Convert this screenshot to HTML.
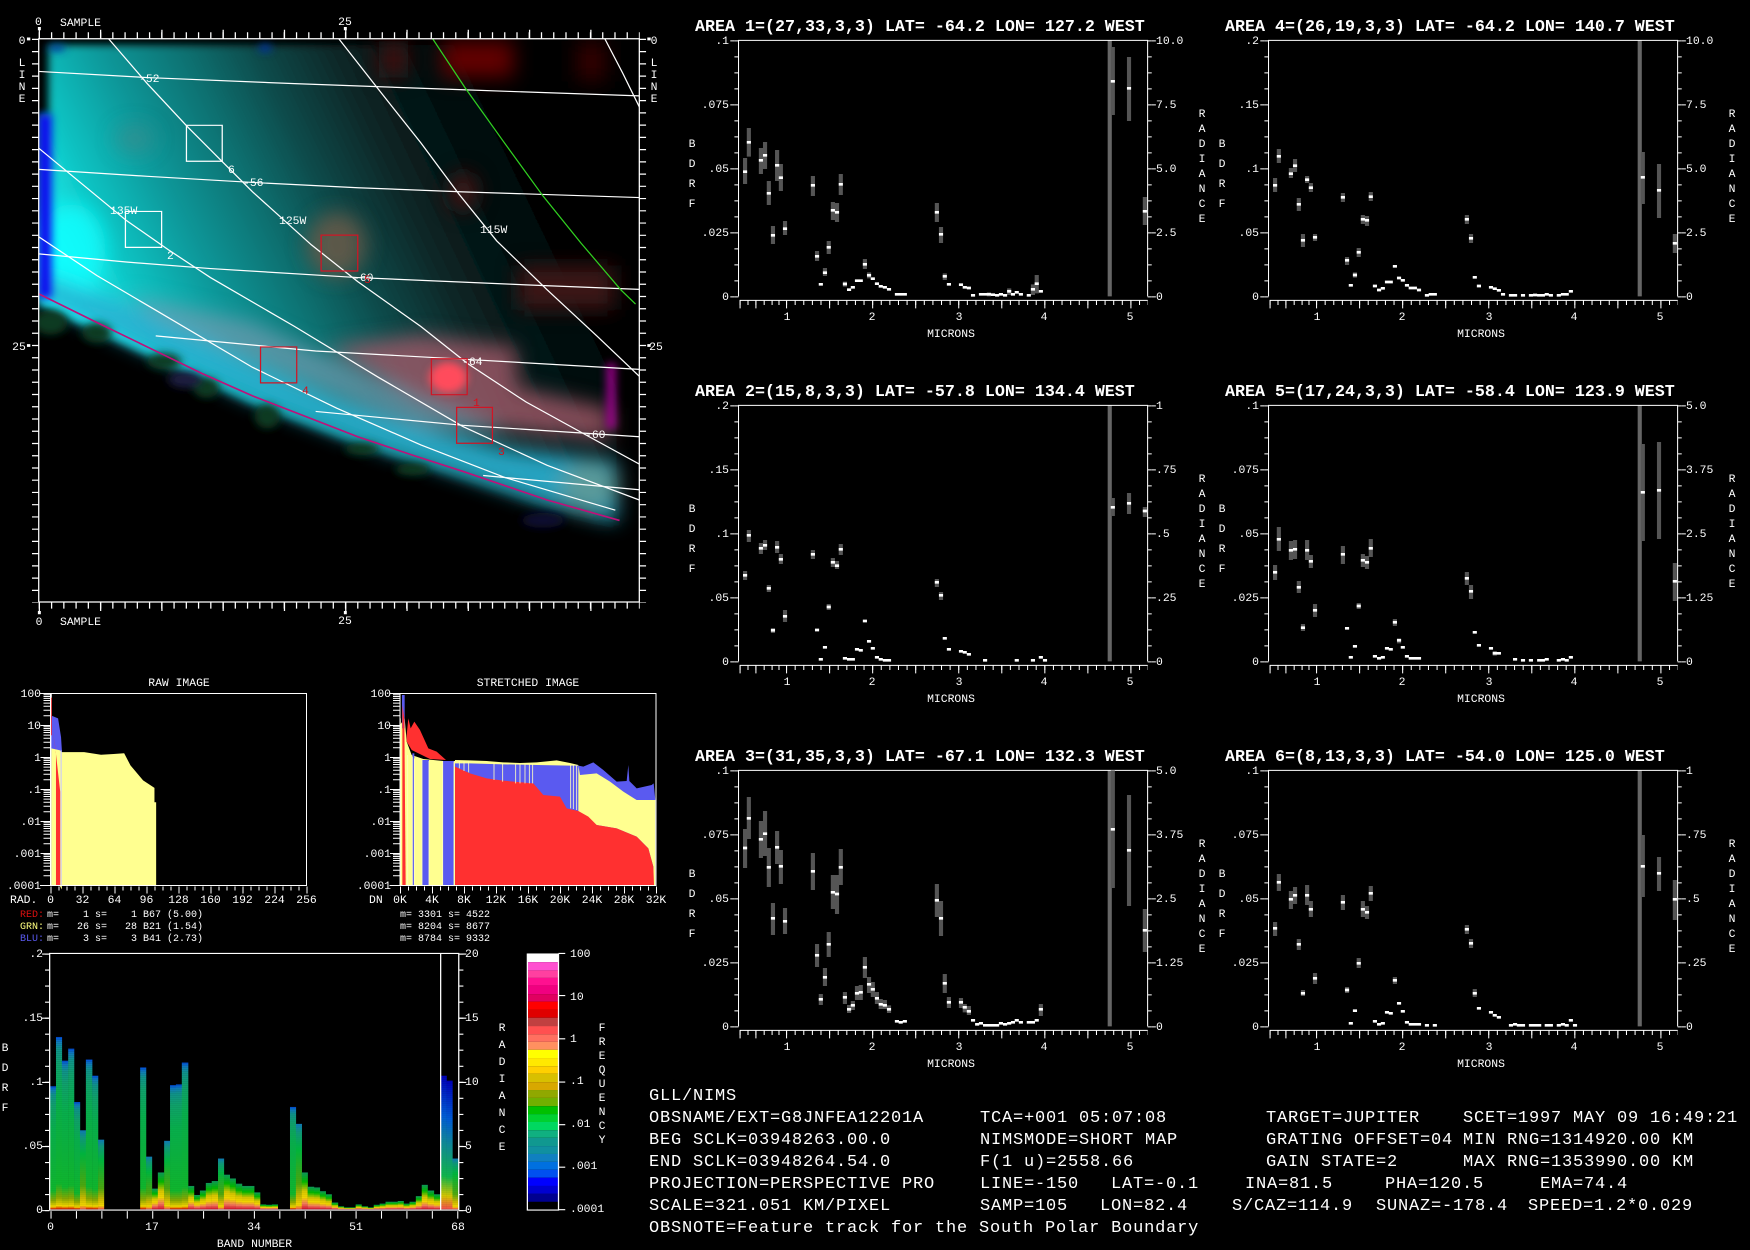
<!DOCTYPE html>
<html><head><meta charset="utf-8"><title>GLL/NIMS</title>
<style>
html,body{margin:0;padding:0;background:#000}
svg{display:block}
text{font-family:"Liberation Mono",monospace;fill:#fff;font-size:11.4px;white-space:pre}
.e{text-anchor:end}.m{text-anchor:middle}
.t{font-size:16.67px;font-weight:bold}
.b{font-size:17px;letter-spacing:.8px}
.s{font-size:10px}
.r{fill:#d8101c}
.g{stroke:#555;stroke-width:12;fill:none}
.w{stroke:#fff;stroke-width:8;fill:none}
.l{fill:none;stroke:#fff;stroke-width:3}
.a{fill:url(#ca)}.c{fill:url(#cb)}.f{fill:url(#cc)}.d{fill:url(#cd)}
</style></head><body>
<svg xmlns="http://www.w3.org/2000/svg" width="1750" height="1250" viewBox="0 0 1750 1250">
<defs>
<linearGradient id="disc" gradientUnits="userSpaceOnUse" x1="130" y1="660" x2="1300" y2="120">
<stop offset="0" stop-color="#18f8f8"/><stop offset=".12" stop-color="#10c4c4"/><stop offset=".25" stop-color="#10989a"/><stop offset=".4" stop-color="#0c6e6e"/><stop offset=".52" stop-color="#0a4848"/><stop offset=".64" stop-color="#082828"/><stop offset=".73" stop-color="#061616"/><stop offset=".85" stop-color="#040606"/><stop offset="1" stop-color="#020202"/>
</linearGradient>
<filter id="bl" filterUnits="userSpaceOnUse" x="0" y="0" width="1700" height="1600"><feGaussianBlur stdDeviation="10"/></filter>
<filter id="bm" filterUnits="userSpaceOnUse" x="0" y="0" width="1700" height="1600"><feGaussianBlur stdDeviation="24"/></filter>
<clipPath id="mc"><rect x="92" y="95" width="1427" height="1380"/></clipPath>
<linearGradient id="ca" x1="0" y1="0" x2="0" y2="1"><stop offset="0" stop-color="#0050e0"/><stop offset=".03" stop-color="#1080c0"/><stop offset=".07" stop-color="#109890"/><stop offset=".16" stop-color="#10a870"/><stop offset=".35" stop-color="#08b850"/><stop offset=".85" stop-color="#10c030"/><stop offset=".93" stop-color="#90b000"/><stop offset=".98" stop-color="#ffe000"/><stop offset="1" stop-color="#e00000"/></linearGradient>
<linearGradient id="cb" x1="0" y1="0" x2="0" y2="1"><stop offset="0" stop-color="#1080c0"/><stop offset=".1" stop-color="#10a080"/><stop offset=".3" stop-color="#00c040"/><stop offset=".7" stop-color="#50b010"/><stop offset=".85" stop-color="#d0c000"/><stop offset=".95" stop-color="#ffe000"/><stop offset="1" stop-color="#ff5050"/></linearGradient>
<linearGradient id="cc" x1="0" y1="0" x2="0" y2="1"><stop offset="0" stop-color="#10a060"/><stop offset=".25" stop-color="#00c000"/><stop offset=".5" stop-color="#e0d000"/><stop offset=".68" stop-color="#ffe000"/><stop offset=".85" stop-color="#ff8060"/><stop offset="1" stop-color="#e01030"/></linearGradient>
<linearGradient id="cd" x1="0" y1="0" x2="0" y2="1"><stop offset="0" stop-color="#0000c0"/><stop offset=".3" stop-color="#0060e0"/><stop offset=".5" stop-color="#1090a0"/><stop offset=".75" stop-color="#10c050"/><stop offset=".9" stop-color="#e0d000"/><stop offset="1" stop-color="#ff5050"/></linearGradient>
<pattern id="st" width="10" height="5.3" patternUnits="userSpaceOnUse"><rect width="10" height="2.6" fill="#000" opacity=".14"/></pattern>
<path id="ld" fill="none" stroke="#fff" d="M0 -9.7h7M0 -15.3h7M0 -19.3h7M0 -22.4h7M0 -25h7M0 -27.1h7M0 -29h7M0 -30.7h7M-3 -32h10"/>
<g id="ax">
<g transform="translate(670,0) scale(.34435,.33333)">
<path d="M1277 121V889" stroke="#666" stroke-width="12" fill="none"/>
<path class="l" d="M199 889V121H1387V889M202 901H1387"/>
<path class="l" stroke-width="12" style="stroke-width:12" stroke-dasharray="3 45" d="M193 121V892M1393 121V892"/>
<path class="l" style="stroke-width:12" stroke-dasharray="3 189" d="M181 121V892M1405 121V892"/>
<path class="l" style="stroke-width:14" stroke-dasharray="3 22" d="M337 908H1388"/>
<path class="l" style="stroke-width:14" d="M202 908h3M225 908h3M248 908h3M272 908h3M295 908h3M315 908h3"/>
<path class="l" style="stroke-width:24" stroke-dasharray="3 122" d="M337 913H1388"/>
<path class="l" style="stroke-width:24" d="M202 913h3M248 913h3"/>
</g>
<text class="m" x="787" y="320">1</text><text class="m" x="872" y="320">2</text><text class="m" x="959" y="320">3</text><text class="m" x="1044" y="320">4</text><text class="m" x="1130" y="320">5</text>
<text class="m" x="951" y="337">MICRONS</text>
<text class="m" x="692" y="147">B</text><text class="m" x="692" y="167">D</text><text class="m" x="692" y="187">R</text><text class="m" x="692" y="207">F</text>
<text class="m" x="1202" y="117">R</text><text class="m" x="1202" y="132">A</text><text class="m" x="1202" y="147">D</text><text class="m" x="1202" y="162">I</text><text class="m" x="1202" y="177">A</text><text class="m" x="1202" y="192">N</text><text class="m" x="1202" y="207">C</text><text class="m" x="1202" y="222">E</text>
</g>
</defs>
<rect width="1750" height="1250" fill="#000"/>

<!-- MAP -->
<g transform="scale(.42088,.40816)">
<g clip-path="url(#mc)">
<g filter="url(#bl)">
<polygon fill="url(#disc)" points="115,110 1465,110 1465,1290 1300,1245 1100,1175 850,1090 600,990 350,870 92,745 92,280 115,280"/>
</g>
<g filter="url(#bm)">
<ellipse cx="170" cy="610" rx="80" ry="110" fill="#10ffff" opacity=".8"/>
<polygon fill="#2ab0d0" opacity=".9" points="92,670 370,770 600,890 800,980 1000,1050 1200,1100 1465,1130 1465,1280 1300,1235 1100,1165 850,1080 600,980 350,860 92,735"/>
<polygon fill="#6f98ac" opacity=".75" points="300,720 600,790 900,930 1100,1000 1200,1060 1000,1050 600,880 370,780"/>
<ellipse cx="1400" cy="1190" rx="70" ry="60" fill="#5a9a9a"/>
<polygon fill="#a05868" opacity=".8" points="780,850 1000,820 1225,850 1230,950 1450,1000 1450,1080 1200,1050 1000,980"/>
<ellipse cx="800" cy="600" rx="70" ry="80" fill="#6a5a48" opacity=".85"/>
<ellipse cx="1100" cy="470" rx="35" ry="50" fill="#401515"/>
<rect x="1050" y="100" width="170" height="90" fill="#620000"/>
<rect x="900" y="100" width="70" height="90" fill="#3a0a0a"/>
<rect x="1370" y="100" width="70" height="100" fill="#300505"/>
<rect x="1230" y="650" width="230" height="110" fill="#3a1212"/>
<ellipse cx="320" cy="340" rx="45" ry="35" fill="#3f8a8a" opacity=".6"/>
</g>
<g filter="url(#bl)">
<ellipse cx="1065" cy="925" rx="45" ry="38" fill="#ff4c5c"/>
<rect x="1442" y="890" width="20" height="160" fill="#a00090"/>
<rect x="92" y="280" width="30" height="450" fill="#1000f0"/>
<ellipse cx="135" cy="118" rx="20" ry="8" fill="#0030a0"/>
<ellipse cx="630" cy="118" rx="15" ry="10" fill="#0030a0"/>
<g fill="#0c3a20">
<ellipse cx="120" cy="790" rx="40" ry="30"/><ellipse cx="230" cy="815" rx="35" ry="25"/><ellipse cx="390" cy="885" rx="40" ry="20"/><ellipse cx="490" cy="950" rx="30" ry="25"/><ellipse cx="635" cy="1020" rx="30" ry="30"/><ellipse cx="860" cy="1100" rx="40" ry="15"/><ellipse cx="980" cy="1150" rx="40" ry="15"/>
</g>
<ellipse cx="440" cy="930" rx="40" ry="20" fill="#1a1a40"/>
<ellipse cx="1290" cy="1275" rx="50" ry="18" fill="#101030"/>
</g>
<g class="l">
<polyline class="l" points="92,175 350,190 700,205 1100,220 1519,235"/>
<polyline class="l" points="92,415 350,432 600,447 850,460 1100,470 1519,484"/>
<polyline class="l" points="92,622 300,642 500,658 850,680 1250,698 1519,709"/>
<polyline class="l" points="370,823 750,860 1100,880 1519,905"/>
<polyline class="l" points="750,1008 1100,1042 1519,1070"/>
<polyline class="l" points="1148,1165 1519,1200"/>
<polyline class="l" points="258,95 350,205 445,310 530,398 600,470 740,600 850,690 1000,800 1110,890 1250,985 1400,1070 1519,1137"/>
<polyline class="l" points="92,363 200,455 300,540 400,612 500,680 700,800 900,925 1100,1045 1300,1140 1519,1225"/>
<polyline class="l" points="92,580 230,675 370,760 600,900 800,1000 1000,1090 1200,1170 1462,1250"/>
<polyline class="l" points="805,95 900,220 1000,350 1090,475 1180,590 1300,710 1420,825 1519,922"/>
<polyline class="l" points="1437,95 1480,180 1519,262"/>
</g>
<polyline fill="none" stroke="#30d020" stroke-width="3" points="1028,95 1105,215 1195,345 1290,480 1380,595 1475,710 1510,745"/>
<polyline fill="none" stroke="#c0107a" stroke-width="4" points="92,720 220,785 350,850 480,915 600,970 730,1022 850,1070 980,1115 1100,1155 1300,1225 1472,1275"/>
</g>
<g fill="none" stroke-width="3">
<path stroke="#fff" d="M443 307H528V395H443ZM298 518H384V606H298Z"/>
<path stroke="#d01525" d="M763 576H850V664H763ZM1025 879H1110V967H1025ZM1085 998H1170V1086H1085ZM619 850H705V938H619Z"/>
</g>
<path class="l" d="M92 1475V95H1519V1475H92"/>
<g class="l">
<path class="l" style="stroke-width:16" stroke-dasharray="3 27" d="M84 95V1476M1527 95V1476"/>
<path class="l" style="stroke-width:16" stroke-dasharray="3 26.1" d="M92 87H1520M92 1483H1520"/>
<path class="l" style="stroke-width:22" stroke-dasharray="3 142.6" d="M92 84H1520M92 1486H1520"/>
</g>
<path fill="#fff" d="M90 66h7v8h-7zM817 66h7v8h-7zM90 1497h7v8h-7zM817 1497h7v8h-7zM64 92h8v7h-8zM64 843h8v7h-8zM1538 92h8v7h-8zM1538 843h8v7h-8z"/>
</g>
<text x="35" y="25">0</text><text x="60" y="26">SAMPLE</text><text class="m" x="345" y="25">25</text>
<text class="m" x="39" y="625">0</text><text x="60" y="625">SAMPLE</text><text class="m" x="345" y="624">25</text>
<text class="m" x="22" y="44">0</text>
<text class="m" x="22" y="66">L</text><text class="m" x="22" y="78">I</text><text class="m" x="22" y="90">N</text><text class="m" x="22" y="102">E</text>
<text class="m" x="19" y="350">25</text>
<text class="m" x="654" y="44">0</text>
<text class="m" x="654" y="66">L</text><text class="m" x="654" y="78">I</text><text class="m" x="654" y="90">N</text><text class="m" x="654" y="102">E</text>
<text class="m" x="656" y="350">25</text>
<text x="139" y="82">-52</text><text x="228" y="173">6</text><text x="243" y="186">-56</text><text x="110" y="214">135W</text><text x="167" y="259">2</text><text x="279" y="224">125W</text><text x="353" y="281">-60</text><text class="r" x="364" y="283">5</text><text x="480" y="233">115W</text><text x="462" y="365">-64</text><text class="r" x="473" y="406">1</text><text class="r" x="302" y="394">4</text><text class="r" x="498" y="455">3</text><text x="585" y="438">-60</text>

<!-- RAW HISTOGRAM -->
<g transform="translate(0,660) scale(.42088,.37622)">
<rect x="120" y="88" width="3" height="512" fill="#fff"/>
<polygon fill="#5a5af0" points="122,148 138,155 145,205 147,240 147,600 122,600"/>
<polygon fill="#ffff90" points="122,235 142,240 147,245 200,245 240,252 270,250 295,248 310,280 340,320 367,340 367,378 371,378 371,600 147,600 147,610 142,600 122,600"/>
<polygon fill="#ff3030" points="124,180 132,235 133,250 143,350 143,600 133,600 133,245"/>
<rect x="120" y="100" width="3" height="100" fill="#ff3030"/>
<rect x="144" y="240" width="2.5" height="360" fill="#c8c8ff"/>
</g>
<rect x="50.5" y="693.5" width="256" height="192" fill="none" stroke="#fff"/>
<g><use href="#ld" x="43.5" y="725.5"/><use href="#ld" x="43.5" y="757.5"/><use href="#ld" x="43.5" y="789.5"/><use href="#ld" x="43.5" y="821.5"/><use href="#ld" x="43.5" y="853.5"/><use href="#ld" x="43.5" y="885.5"/>
<use href="#ld" x="393" y="725.5"/><use href="#ld" x="393" y="757.5"/><use href="#ld" x="393" y="789.5"/><use href="#ld" x="393" y="821.5"/><use href="#ld" x="393" y="853.5"/><use href="#ld" x="393" y="885.5"/></g>
<path stroke="#fff" fill="none" stroke-dasharray="1 7" stroke-width="4" d="M50.5 888.5H307.5M400 888.5H657"/>
<path stroke="#fff" fill="none" stroke-dasharray="1 31" stroke-width="7" d="M50.5 890H307.5M400 890H657"/>
<path stroke="#fff" d="M40 693.5h10M40 885.5h10M389.5 693.5h10M389.5 885.5h10" fill="none"/>
<text class="m" x="179" y="686">RAW IMAGE</text>
<g class="e"><text class="e" x="41" y="697">100</text><text class="e" x="41" y="729">10</text><text class="e" x="41" y="761">1</text><text class="e" x="41" y="793">.1</text><text class="e" x="41" y="825">.01</text><text class="e" x="41" y="857">.001</text><text class="e" x="41" y="889">.0001</text></g>
<text x="10" y="903">RAD.</text>
<text class="m" x="50.5" y="903">0</text><text class="m" x="82.5" y="903">32</text><text class="m" x="114.5" y="903">64</text><text class="m" x="146.5" y="903">96</text><text class="m" x="178.5" y="903">128</text><text class="m" x="210.5" y="903">160</text><text class="m" x="242.5" y="903">192</text><text class="m" x="274.5" y="903">224</text><text class="m" x="306.5" y="903">256</text>
<text class="s" x="20" y="917" style="fill:#e01010">RED:</text><text class="s" x="47" y="917">m=    1 s=    1 B67 (5.00)</text>
<text class="s" x="20" y="929" style="fill:#ffff80">GRN:</text><text class="s" x="47" y="929">m=   26 s=   28 B21 (1.54)</text>
<text class="s" x="20" y="941" style="fill:#5a5af0">BLU:</text><text class="s" x="47" y="941">m=    3 s=    3 B41 (2.73)</text>

<!-- STRETCHED HISTOGRAM -->
<g transform="translate(370,685) scale(.33333)">
<polygon fill="#5a5af0" points="255,228 300,228 350,232 400,234 450,237 500,236 560,232 600,238 625,242 640,245 670,232 700,255 740,290 770,288 775,240 778,288 800,310 845,300 851,295 856,345 858,600 255,600"/>
<polygon fill="#ffff90" points="255,225 300,226 350,228 400,232 450,234 500,232 560,226 600,234 625,240 625,242 600,242 500,240 400,238 300,235 255,235"/>
<polygon fill="#ffff90" points="90,120 104,100 110,170 125,210 160,222 220,228 255,228 255,600 90,600"/>
<rect x="156" y="225" width="21" height="375" fill="#5a5af0"/>
<rect x="218" y="228" width="34" height="372" fill="#5a5af0"/>
<rect x="127" y="205" width="6" height="395" fill="#5a5af0"/>
<rect x="96" y="30" width="8" height="100" fill="#5a5af0"/>
<polygon fill="#ffff90" points="625,242 630,270 680,265 720,290 760,320 800,345 856,345 856,600 850,600 850,545 835,490 800,455 740,430 680,420 625,380"/>
<polygon fill="#ff3030" points="255,245 300,265 350,280 400,287 490,295 520,330 570,335 590,370 625,378 655,395 680,420 740,430 800,455 835,490 850,545 852,600 255,600"/>
<polygon fill="#ff3030" points="97,60 103,100 107,600 97,600"/>
<polygon fill="#ff3030" points="110,150 115,100 122,130 133,110 150,135 175,190 200,200 228,225 180,222 125,195 110,170"/>
<g stroke="#ffffc0" stroke-width="2.5" fill="none"><path d="M91 100V600M113 210V600M127 215V600M133 220V600M156 225V600M177 228V600M218 228V600M252 230V600"/><path d="M268 228V250M282 230V258M296 230V262M372 235V285M398 235V290M437 238V295M450 238V295M465 238V295M478 238V295M488 238V295M602 240V370M620 242V375M610 240V372"/></g>
</g>
<rect x="400" y="693.5" width="256" height="192" fill="none" stroke="#fff"/>
<text class="m" x="528" y="686">STRETCHED IMAGE</text>
<text class="e" x="391" y="697">100</text><text class="e" x="391" y="729">10</text><text class="e" x="391" y="761">1</text><text class="e" x="391" y="793">.1</text><text class="e" x="391" y="825">.01</text><text class="e" x="391" y="857">.001</text><text class="e" x="391" y="889">.0001</text>
<text x="369" y="903">DN</text>
<text class="m" x="400" y="903">0K</text><text class="m" x="432" y="903">4K</text><text class="m" x="464" y="903">8K</text><text class="m" x="496" y="903">12K</text><text class="m" x="528" y="903">16K</text><text class="m" x="560" y="903">20K</text><text class="m" x="592" y="903">24K</text><text class="m" x="624" y="903">28K</text><text class="m" x="656" y="903">32K</text>
<text class="s" x="400" y="917">m= 3301 s= 4522</text><text class="s" x="400" y="929">m= 8204 s= 8677</text><text class="s" x="400" y="941">m= 8784 s= 9332</text>

<!-- BAND PLOT -->
<g transform="translate(0,660) scale(.42088,.37622)">
<g>
<rect class="a" x="118" y="1133" width="15.5" height="327"/><rect class="a" x="133" y="1002" width="14.5" height="458"/><rect class="a" x="147" y="1065" width="15.5" height="395"/><rect class="a" x="162" y="1033" width="14.5" height="427"/><rect class="a" x="176" y="1175" width="14.5" height="285"/><rect class="c" x="190" y="1250" width="14.5" height="210"/><rect class="a" x="204" y="1062" width="15.5" height="398"/><rect class="a" x="219" y="1105" width="14.5" height="355"/><rect class="c" x="233" y="1275" width="14.5" height="185"/>
<rect class="a" x="333" y="1083" width="14.5" height="377"/><rect class="c" x="347" y="1320" width="14.5" height="140"/><rect class="f" x="361" y="1405" width="14.5" height="55"/><rect class="f" x="375" y="1362" width="15.5" height="98"/><rect class="c" x="390" y="1278" width="14.5" height="182"/><rect class="a" x="404" y="1130" width="14.5" height="330"/><rect class="a" x="418" y="1128" width="14.5" height="332"/><rect class="a" x="432" y="1070" width="15.5" height="390"/>
<rect class="f" x="447" y="1398" width="14.5" height="62"/><rect class="f" x="461" y="1422" width="14.5" height="38"/><rect class="f" x="475" y="1410" width="14.5" height="50"/><rect class="f" x="489" y="1390" width="14.5" height="70"/><rect class="f" x="503" y="1385" width="15.5" height="75"/><rect class="c" x="518" y="1325" width="14.5" height="135"/><rect class="f" x="532" y="1368" width="14.5" height="92"/><rect class="f" x="546" y="1378" width="14.5" height="82"/><rect class="f" x="560" y="1392" width="15.5" height="68"/><rect class="f" x="575" y="1398" width="15.5" height="62"/><rect class="f" x="590" y="1398" width="14.5" height="62"/><rect class="f" x="604" y="1415" width="14.5" height="45"/><rect class="f" x="618" y="1447" width="14.5" height="13"/><rect class="f" x="632" y="1448" width="14.5" height="12"/><rect class="f" x="646" y="1447" width="14.5" height="13"/>
<rect class="a" x="689" y="1188" width="14.5" height="272"/><rect class="c" x="703" y="1233" width="14.5" height="227"/><rect class="f" x="717" y="1362" width="14.5" height="98"/><rect class="f" x="731" y="1400" width="15.5" height="60"/><rect class="f" x="746" y="1402" width="14.5" height="58"/><rect class="f" x="760" y="1412" width="14.5" height="48"/><rect class="f" x="774" y="1420" width="14.5" height="40"/><rect class="f" x="788" y="1442" width="15.5" height="18"/><rect class="f" x="803" y="1452" width="14.5" height="8"/><rect class="f" x="817" y="1455" width="14.5" height="5"/><rect class="f" x="831" y="1455" width="14.5" height="5"/><rect class="f" x="845" y="1447" width="14.5" height="13"/><rect class="f" x="859" y="1452" width="15.5" height="8"/><rect class="f" x="874" y="1455" width="14.5" height="5"/><rect class="f" x="888" y="1448" width="14.5" height="12"/><rect class="f" x="902" y="1445" width="14.5" height="15"/><rect class="f" x="916" y="1440" width="14.5" height="20"/><rect class="f" x="930" y="1440" width="15.5" height="20"/><rect class="f" x="945" y="1438" width="14.5" height="22"/><rect class="f" x="959" y="1445" width="14.5" height="15"/><rect class="f" x="973" y="1440" width="15.5" height="20"/><rect class="f" x="988" y="1425" width="14.5" height="35"/><rect class="f" x="1002" y="1395" width="14.5" height="65"/><rect class="f" x="1016" y="1410" width="15.5" height="50"/><rect class="f" x="1031" y="1420" width="16" height="40"/>
<rect class="d" x="1047" y="1105" width="14.5" height="355"/><rect class="d" x="1061" y="1118" width="14.5" height="342"/><rect class="c" x="1075" y="1325" width="14.5" height="135"/>
</g>
<rect x="118" y="985" width="972" height="477" fill="url(#st)"/>
<path class="l" d="M118 1462V780H1090V1462H118M1047 780V1462"/>
<path class="l" style="stroke-width:10" stroke-dasharray="3 39.63" d="M112 780V1465M1096 780V1465"/>
<path class="l" style="stroke-width:18" stroke-dasharray="3 167.6" d="M109 780V1465M1099 780V1465"/>
<path class="l" style="stroke-width:20" stroke-dasharray="2.5 57.9" d="M120 1475H1092"/>
</g>
<text class="e" x="43" y="957">.2</text><text class="e" x="43" y="1021">.15</text><text class="e" x="43" y="1085">.1</text><text class="e" x="43" y="1149">.05</text><text class="e" x="43" y="1213">0</text>
<text x="465" y="957">20</text><text x="465" y="1021">15</text><text x="465" y="1085">10</text><text x="465" y="1149">5</text><text x="465" y="1213">0</text>
<text class="m" x="50.5" y="1230">0</text><text class="m" x="152" y="1230">17</text><text class="m" x="254" y="1230">34</text><text class="m" x="356" y="1230">51</text><text class="m" x="458" y="1230">68</text>
<text class="m" x="254.5" y="1247">BAND NUMBER</text>
<text class="m" x="5" y="1051">B</text><text class="m" x="5" y="1071">D</text><text class="m" x="5" y="1091">R</text><text class="m" x="5" y="1111">F</text>
<text class="m" x="502" y="1031">R</text><text class="m" x="502" y="1048">A</text><text class="m" x="502" y="1065">D</text><text class="m" x="502" y="1082">I</text><text class="m" x="502" y="1099">A</text><text class="m" x="502" y="1116">N</text><text class="m" x="502" y="1133">C</text><text class="m" x="502" y="1150">E</text>
<text class="m" x="602" y="1031">F</text><text class="m" x="602" y="1045">R</text><text class="m" x="602" y="1059">E</text><text class="m" x="602" y="1073">Q</text><text class="m" x="602" y="1087">U</text><text class="m" x="602" y="1101">E</text><text class="m" x="602" y="1115">N</text><text class="m" x="602" y="1129">C</text><text class="m" x="602" y="1143">Y</text>

<!-- COLOUR BAR -->
<g transform="translate(0,660) scale(.42088,.37622)">
<rect x="1253" y="780" width="74" height="23" fill="#fff"/><rect x="1253" y="803" width="74" height="22" fill="#ff50d0"/><rect x="1253" y="825" width="74" height="20" fill="#ff40a0"/><rect x="1253" y="845" width="74" height="20" fill="#ff1090"/><rect x="1253" y="865" width="74" height="23" fill="#f00080"/><rect x="1253" y="888" width="74" height="20" fill="#e00060"/><rect x="1253" y="908" width="74" height="22" fill="#f00"/><rect x="1253" y="930" width="74" height="21" fill="#e00000"/><rect x="1253" y="951" width="74" height="22" fill="#c04040"/><rect x="1253" y="973" width="74" height="22" fill="#ff5050"/><rect x="1253" y="995" width="74" height="20" fill="#ff7060"/><rect x="1253" y="1015" width="74" height="21" fill="#ff9060"/><rect x="1253" y="1036" width="74" height="22" fill="#ff0"/><rect x="1253" y="1058" width="74" height="22" fill="#ffe800"/><rect x="1253" y="1080" width="74" height="20" fill="#ffd000"/><rect x="1253" y="1100" width="74" height="22" fill="#d8c000"/><rect x="1253" y="1122" width="74" height="21" fill="#d8a800"/><rect x="1253" y="1143" width="74" height="21" fill="#90a800"/><rect x="1253" y="1164" width="74" height="22" fill="#70b000"/><rect x="1253" y="1186" width="74" height="21" fill="#00c000"/><rect x="1253" y="1207" width="74" height="21" fill="#00d030"/><rect x="1253" y="1228" width="74" height="22" fill="#00d860"/><rect x="1253" y="1250" width="74" height="20" fill="#10b080"/><rect x="1253" y="1270" width="74" height="22" fill="#109890"/><rect x="1253" y="1292" width="74" height="21" fill="#1090a0"/><rect x="1253" y="1313" width="74" height="21" fill="#1080c0"/><rect x="1253" y="1334" width="74" height="21" fill="#0070e0"/><rect x="1253" y="1355" width="74" height="21" fill="#0050f0"/><rect x="1253" y="1376" width="74" height="22" fill="#00f"/><rect x="1253" y="1398" width="74" height="21" fill="#0000d0"/><rect x="1253" y="1419" width="74" height="21" fill="#000090"/>
<path class="l" d="M1253 780V1462H1327V780M1327 780H1343M1327 892H1343M1327 1007H1343M1327 1122H1343M1327 1235H1343M1327 1348H1343M1327 1461H1343"/>
</g>
<text x="570" y="957">100</text><text x="570" y="1000">10</text><text x="570" y="1042">1</text><text x="570" y="1084">.1</text><text x="570" y="1127">.01</text><text x="570" y="1169">.001</text><text x="570" y="1212">.0001</text>

<!-- SPECTRA -->
<g><use href="#ax"/></g>
<g transform="translate(0,365)"><use href="#ax"/></g>
<g transform="translate(0,730)"><use href="#ax"/></g>
<g transform="translate(530,0)"><use href="#ax"/></g>
<g transform="translate(530,365)"><use href="#ax"/></g>
<g transform="translate(530,730)"><use href="#ax"/></g>

<!-- chart 1 -->
<g transform="translate(670,0) scale(.34435,.33333)">
<path class="g" d="M218 474V552M229 384V470M264 444V522M276 426V507M287 543V615M299 678V732M311 450V543M322 492V573M334 663V705M415 528V588M427 753V783M450 804V828M461 723V762M473 606V660M485 609V666M496 522V585M508 845V860M566 777V807M578 817V835M775 609V666M787 681V729M798 820V840M926 877V889M985 865V885M1054 853V885M1065 825V880M1286 141V345M1333 171V363M1379 591V675"/>
<path class="w" d="M212 515h12M223 427h12M258 481h12M270 466h12M281 580h12M293 706h12M305 496h12M316 533h12M328 686h12M409 556h12M421 769h12M432 853h12M444 818h12M455 742h12M467 631h12M479 637h12M490 553h12M502 852h12M514 869h12M525 862h12M537 842h12M548 842h12M560 793h12M572 826h12M583 836h12M595 851h12M606 859h12M618 862h12M630 868h12M653 883h12M664 883h12M676 883h12M769 637h12M781 703h12M792 829h12M804 853h12M839 854h12M850 862h12M862 864h12M874 886h12M897 883h12M909 883h12M920 883h12M932 884h12M944 886h12M955 883h12M967 886h12M979 874h12M990 883h12M1001 877h12M1013 883h12M1036 886h12M1048 868h12M1059 851h12M1071 874h12M1280 244h12M1327 265h12M1373 634h12"/>
</g>
<!-- chart 2 -->
<g transform="translate(670,365) scale(.34435,.33333)">
<path class="g" d="M218 618V645M229 495V531M264 534V567M276 525V555M287 660V681M299 789V804M311 528V564M322 567V597M334 735V771M415 555V582M461 717V735M473 579V606M485 588V612M496 537V570M775 642V666M787 681V705M1286 399V453M1333 384V447M1379 426V456"/>
<path class="w" d="M212 631h12M223 511h12M258 550h12M270 541h12M281 670h12M293 796h12M305 547h12M316 583h12M328 754h12M409 568h12M421 795h12M432 883h12M444 847h12M455 726h12M467 592h12M479 602h12M490 553h12M502 880h12M514 883h12M525 883h12M537 853h12M548 856h12M560 768h12M572 829h12M583 850h12M595 877h12M606 883h12M618 886h12M630 886h12M769 652h12M781 691h12M792 820h12M804 853h12M839 859h12M850 862h12M862 868h12M909 886h12M1001 886h12M1048 886h12M1071 877h12M1083 886h12M1280 427h12M1327 415h12M1373 438h12"/>
</g>
<!-- chart 3 -->
<g transform="translate(670,730) scale(.34435,.33333)">
<path class="g" d="M218 297V414M229 201V327M264 273V384M276 243V378M287 354V471M299 519V615M311 303V402M322 360V462M334 534V612M415 369V480M427 642V711M438 792V825M450 714V768M461 606V681M473 435V537M485 435V552M496 357V465M508 786V822M520 825V849M531 813V840M543 768V810M554 765V810M566 681V744M578 741V789M589 756V801M601 786V822M612 807V837M624 810V837M636 826V849M775 462V561M787 513V618M798 732V789M810 801V834M845 804V834M856 822V847M868 828V855M1077 822V858M1286 121V474M1333 195V528M1379 537V666"/>
<path class="w" d="M212 354h12M223 265h12M258 328h12M270 311h12M281 412h12M293 565h12M305 352h12M316 409h12M328 574h12M409 424h12M421 676h12M432 808h12M444 742h12M455 643h12M467 487h12M479 492h12M490 412h12M502 802h12M514 838h12M525 826h12M537 790h12M548 787h12M560 712h12M572 763h12M583 778h12M595 805h12M606 823h12M618 826h12M630 838h12M653 874h12M664 877h12M676 874h12M769 511h12M781 565h12M792 760h12M804 817h12M839 817h12M850 832h12M862 844h12M874 871h12M886 883h12M897 880h12M909 886h12M920 886h12M932 886h12M944 886h12M955 880h12M967 883h12M979 880h12M990 877h12M1001 871h12M1013 877h12M1036 877h12M1048 877h12M1059 871h12M1071 838h12M1280 298h12M1327 361h12M1373 601h12"/>
</g>
<!-- chart 4 -->
<g transform="translate(1200,0) scale(.34435,.33333)">
<path class="g" d="M218 534V576M229 447V489M264 504V534M276 477V516M287 594V633M299 702V741M311 528V549M322 549V576M334 702V723M415 579V606M427 771V795M450 817V833M461 744V771M473 645V672M485 648V678M496 576V603M775 645V672M787 702V729M1286 456V612M1333 492V654M1379 702V759"/>
<path class="w" d="M212 556h12M223 469h12M258 521h12M270 497h12M281 613h12M293 721h12M305 539h12M316 563h12M328 712h12M409 592h12M421 781h12M432 856h12M444 825h12M455 757h12M467 658h12M479 661h12M490 590h12M502 858h12M514 870h12M525 865h12M537 846h12M548 846h12M560 799h12M572 834h12M583 841h12M595 856h12M606 864h12M618 864h12M630 870h12M653 886h12M664 883h12M676 883h12M769 658h12M781 715h12M792 832h12M804 858h12M839 862h12M850 866h12M862 871h12M874 883h12M897 886h12M909 886h12M932 886h12M955 886h12M967 885h12M979 886h12M990 886h12M1001 883h12M1013 886h12M1036 886h12M1048 883h12M1059 883h12M1071 874h12M1280 532h12M1327 571h12M1373 730h12"/>
</g>
<!-- chart 5 -->
<g transform="translate(1200,365) scale(.34435,.33333)">
<path class="g" d="M218 600V645M229 486V558M264 528V585M276 525V582M287 648V684M299 777V798M311 525V585M322 570V609M334 717V756M415 543V597M461 714V732M473 567V606M485 573V612M496 522V576M566 762V783M578 820V835M775 621V660M787 660V702M856 858V872M1286 237V528M1333 231V522M1379 594V708"/>
<path class="w" d="M212 622h12M223 523h12M258 556h12M270 553h12M281 667h12M293 788h12M305 556h12M316 589h12M328 736h12M409 568h12M421 790h12M432 877h12M444 844h12M455 723h12M467 586h12M479 592h12M490 550h12M502 874h12M514 880h12M525 877h12M537 850h12M548 853h12M560 772h12M572 826h12M583 847h12M595 874h12M606 880h12M618 880h12M630 880h12M769 640h12M781 679h12M792 802h12M804 841h12M839 850h12M850 865h12M862 865h12M909 883h12M932 886h12M955 886h12M979 886h12M990 886h12M1001 883h12M1036 886h12M1048 883h12M1059 886h12M1071 877h12M1280 382h12M1327 376h12M1373 649h12"/>
</g>
<!-- chart 6 -->
<g transform="translate(1200,730) scale(.34435,.33333)">
<path class="g" d="M218 576V618M229 432V483M264 483V537M276 471V522M287 627V660M299 780V798M311 465V525M322 513V561M334 729V762M415 495V540M427 771V789M461 684V714M473 513V561M485 528V567M496 468V513M566 741V762M775 585V612M787 627V654M798 777V801M1286 315V501M1333 381V483M1379 450V570"/>
<path class="w" d="M212 595h12M223 457h12M258 508h12M270 496h12M281 643h12M293 790h12M305 496h12M316 538h12M328 745h12M409 517h12M421 780h12M432 880h12M444 842h12M455 700h12M467 538h12M479 547h12M490 490h12M502 874h12M514 883h12M525 880h12M537 847h12M548 850h12M560 751h12M572 820h12M583 844h12M595 877h12M606 883h12M618 883h12M630 883h12M653 886h12M676 886h12M769 598h12M781 640h12M792 790h12M804 835h12M839 847h12M850 856h12M862 862h12M897 886h12M909 883h12M920 886h12M932 886h12M955 886h12M967 886h12M979 886h12M1001 886h12M1013 886h12M1036 886h12M1048 883h12M1059 886h12M1071 871h12M1083 886h12M1280 409h12M1327 430h12M1373 508h12"/>
</g>

<!-- chart titles and labels -->
<g>
<text class="t" x="695" y="31">AREA 1=(27,33,3,3) LAT= -64.2 LON= 127.2 WEST</text>
<text class="e" x="729" y="44">.1</text><text class="e" x="729" y="108">.075</text><text class="e" x="729" y="172">.05</text><text class="e" x="729" y="236">.025</text><text class="e" x="729" y="300">0</text>
<text x="1156" y="44">10.0</text><text x="1156" y="108">7.5</text><text x="1156" y="172">5.0</text><text x="1156" y="236">2.5</text><text x="1156" y="300">0</text>
</g>
<g transform="translate(0,365)">
<text class="t" x="695" y="31">AREA 2=(15,8,3,3) LAT= -57.8 LON= 134.4 WEST</text>
<text class="e" x="729" y="44">.2</text><text class="e" x="729" y="108">.15</text><text class="e" x="729" y="172">.1</text><text class="e" x="729" y="236">.05</text><text class="e" x="729" y="300">0</text>
<text x="1156" y="44">1</text><text x="1156" y="108">.75</text><text x="1156" y="172">.5</text><text x="1156" y="236">.25</text><text x="1156" y="300">0</text>
</g>
<g transform="translate(0,730)">
<text class="t" x="695" y="31">AREA 3=(31,35,3,3) LAT= -67.1 LON= 132.3 WEST</text>
<text class="e" x="729" y="44">.1</text><text class="e" x="729" y="108">.075</text><text class="e" x="729" y="172">.05</text><text class="e" x="729" y="236">.025</text><text class="e" x="729" y="300">0</text>
<text x="1156" y="44">5.0</text><text x="1156" y="108">3.75</text><text x="1156" y="172">2.5</text><text x="1156" y="236">1.25</text><text x="1156" y="300">0</text>
</g>
<g transform="translate(530,0)">
<text class="t" x="695" y="31">AREA 4=(26,19,3,3) LAT= -64.2 LON= 140.7 WEST</text>
<text class="e" x="729" y="44">.2</text><text class="e" x="729" y="108">.15</text><text class="e" x="729" y="172">.1</text><text class="e" x="729" y="236">.05</text><text class="e" x="729" y="300">0</text>
<text x="1156" y="44">10.0</text><text x="1156" y="108">7.5</text><text x="1156" y="172">5.0</text><text x="1156" y="236">2.5</text><text x="1156" y="300">0</text>
</g>
<g transform="translate(530,365)">
<text class="t" x="695" y="31">AREA 5=(17,24,3,3) LAT= -58.4 LON= 123.9 WEST</text>
<text class="e" x="729" y="44">.1</text><text class="e" x="729" y="108">.075</text><text class="e" x="729" y="172">.05</text><text class="e" x="729" y="236">.025</text><text class="e" x="729" y="300">0</text>
<text x="1156" y="44">5.0</text><text x="1156" y="108">3.75</text><text x="1156" y="172">2.5</text><text x="1156" y="236">1.25</text><text x="1156" y="300">0</text>
</g>
<g transform="translate(530,730)">
<text class="t" x="695" y="31">AREA 6=(8,13,3,3) LAT= -54.0 LON= 125.0 WEST</text>
<text class="e" x="729" y="44">.1</text><text class="e" x="729" y="108">.075</text><text class="e" x="729" y="172">.05</text><text class="e" x="729" y="236">.025</text><text class="e" x="729" y="300">0</text>
<text x="1156" y="44">1</text><text x="1156" y="108">.75</text><text x="1156" y="172">.5</text><text x="1156" y="236">.25</text><text x="1156" y="300">0</text>
</g>

<!-- INFO BLOCK -->
<text class="b" x="649" y="1100">GLL/NIMS</text>
<text class="b" x="649" y="1122">OBSNAME/EXT=G8JNFEA12201A</text><text class="b" x="980" y="1122">TCA=+001 05:07:08</text><text class="b" x="1266" y="1122">TARGET=JUPITER</text><text class="b" x="1463" y="1122">SCET=1997 MAY 09 16:49:21</text>
<text class="b" x="649" y="1144">BEG SCLK=03948263.00.0</text><text class="b" x="980" y="1144">NIMSMODE=SHORT MAP</text><text class="b" x="1266" y="1144">GRATING OFFSET=04</text><text class="b" x="1463" y="1144">MIN RNG=1314920.00 KM</text>
<text class="b" x="649" y="1166">END SCLK=03948264.54.0</text><text class="b" x="980" y="1166">F(1 u)=2558.66</text><text class="b" x="1266" y="1166">GAIN STATE=2</text><text class="b" x="1463" y="1166">MAX RNG=1353990.00 KM</text>
<text class="b" x="649" y="1188">PROJECTION=PERSPECTIVE PRO</text><text class="b" x="980" y="1188">LINE=-150</text><text class="b" x="1111" y="1188">LAT=-0.1</text><text class="b" x="1245" y="1188">INA=81.5</text><text class="b" x="1385" y="1188">PHA=120.5</text><text class="b" x="1540" y="1188">EMA=74.4</text>
<text class="b" x="649" y="1210">SCALE=321.051 KM/PIXEL</text><text class="b" x="980" y="1210">SAMP=105</text><text class="b" x="1100" y="1210">LON=82.4</text><text class="b" x="1232" y="1210">S/CAZ=114.9</text><text class="b" x="1376" y="1210">SUNAZ=-178.4</text><text class="b" x="1528" y="1210">SPEED=1.2*0.029</text>
<text class="b" x="649" y="1232">OBSNOTE=Feature track for the South Polar Boundary</text>
</svg>
</body></html>
